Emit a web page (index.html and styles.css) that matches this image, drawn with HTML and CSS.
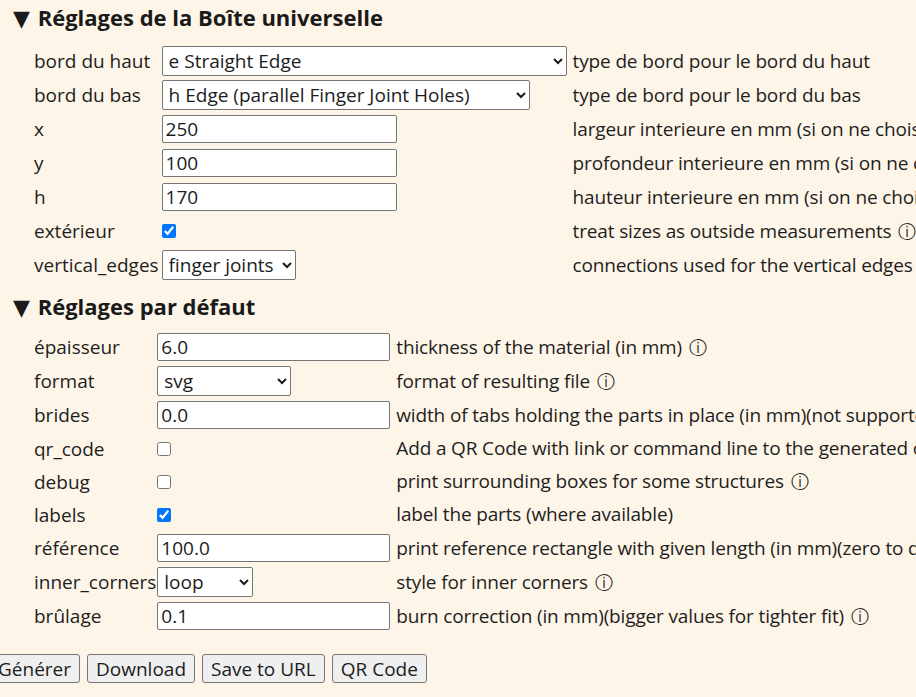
FILE: index.html
```html
<!DOCTYPE html>
<html lang="fr">
<head>
<meta charset="utf-8">
<title>Boîte universelle</title>
<link rel="stylesheet" href="styles.css">
</head>
<body>
<form class="page">
  <details class="group" open>
    <summary class="group-title"><span class="arrow">▼</span> Réglages de la Boîte universelle</summary>
    <table class="params params-box">
      <tr>
        <td class="lbl">bord du haut</td>
        <td class="ctl"><select class="sel sel-top"><option>e Straight Edge</option></select></td>
        <td class="desc">type de bord pour le bord du haut</td>
      </tr>
      <tr>
        <td class="lbl">bord du bas</td>
        <td class="ctl"><select class="sel sel-bottom"><option>h Edge (parallel Finger Joint Holes)</option></select></td>
        <td class="desc">type de bord pour le bord du bas</td>
      </tr>
      <tr>
        <td class="lbl">x</td>
        <td class="ctl"><input class="txt txt-box" type="text" value="250"></td>
        <td class="desc">largeur interieure en mm (si on ne choisit pas extérieur) <span class="info">ⓘ</span></td>
      </tr>
      <tr>
        <td class="lbl">y</td>
        <td class="ctl"><input class="txt txt-box" type="text" value="100"></td>
        <td class="desc">profondeur interieure en mm (si on ne choisit pas extérieur) <span class="info">ⓘ</span></td>
      </tr>
      <tr>
        <td class="lbl">h</td>
        <td class="ctl"><input class="txt txt-box" type="text" value="170"></td>
        <td class="desc">hauteur interieure en mm (si on ne choisit pas extérieur) <span class="info">ⓘ</span></td>
      </tr>
      <tr>
        <td class="lbl">extérieur</td>
        <td class="ctl"><input class="chk" type="checkbox" checked></td>
        <td class="desc">treat sizes as outside measurements <span class="info">ⓘ</span></td>
      </tr>
      <tr>
        <td class="lbl">vertical_edges</td>
        <td class="ctl"><select class="sel sel-edges"><option>finger joints</option></select></td>
        <td class="desc">connections used for the vertical edges <span class="info">ⓘ</span></td>
      </tr>
    </table>
  </details>

  <details class="group" open>
    <summary class="group-title"><span class="arrow">▼</span> Réglages par défaut</summary>
    <table class="params params-default">
      <tr>
        <td class="lbl">épaisseur</td>
        <td class="ctl"><input class="txt txt-def" type="text" value="6.0"></td>
        <td class="desc">thickness of the material (in mm) <span class="info">ⓘ</span></td>
      </tr>
      <tr>
        <td class="lbl">format</td>
        <td class="ctl"><select class="sel sel-format"><option>svg</option></select></td>
        <td class="desc">format of resulting file <span class="info">ⓘ</span></td>
      </tr>
      <tr>
        <td class="lbl">brides</td>
        <td class="ctl"><input class="txt txt-def" type="text" value="0.0"></td>
        <td class="desc">width of tabs holding the parts in place (in mm)(not supported everywhere) <span class="info">ⓘ</span></td>
      </tr>
      <tr class="row-check">
        <td class="lbl">qr_code</td>
        <td class="ctl"><input class="chk" type="checkbox"></td>
        <td class="desc">Add a QR Code with link or command line to the generated output <span class="info">ⓘ</span></td>
      </tr>
      <tr class="row-check">
        <td class="lbl">debug</td>
        <td class="ctl"><input class="chk" type="checkbox"></td>
        <td class="desc">print surrounding boxes for some structures <span class="info">ⓘ</span></td>
      </tr>
      <tr class="row-check">
        <td class="lbl">labels</td>
        <td class="ctl"><input class="chk" type="checkbox" checked></td>
        <td class="desc">label the parts (where available)</td>
      </tr>
      <tr>
        <td class="lbl">référence</td>
        <td class="ctl"><input class="txt txt-def" type="text" value="100.0"></td>
        <td class="desc">print reference rectangle with given length (in mm)(zero to disable) <span class="info">ⓘ</span></td>
      </tr>
      <tr>
        <td class="lbl">inner_corners</td>
        <td class="ctl"><select class="sel sel-corners"><option>loop</option></select></td>
        <td class="desc">style for inner corners <span class="info">ⓘ</span></td>
      </tr>
      <tr>
        <td class="lbl">brûlage</td>
        <td class="ctl"><input class="txt txt-def" type="text" value="0.1"></td>
        <td class="desc">burn correction (in mm)(bigger values for tighter fit) <span class="info">ⓘ</span></td>
      </tr>
    </table>
  </details>

  <div class="actions">
    <button type="button" class="btn">Générer</button>
    <button type="button" class="btn">Download</button>
    <button type="button" class="btn">Save to URL</button>
    <button type="button" class="btn">QR Code</button>
  </div>
</form>
</body>
</html>
```
FILE: styles.css
```css
html {
  overflow: hidden;
}

body {
  margin: 0;
  background: #fdf5e8;
  color: #1e1e1e;
  font-family: "Open Sans", "Noto Sans", "DejaVu Sans", sans-serif;
  font-size: 19px;
}

.page {
  margin: 0;
  white-space: nowrap;
}

.group-title {
  list-style: none;
  display: block;
  height: 34px;
  line-height: 34px;
  padding-left: 13px;
  font-size: 22px;
  font-weight: 700;
  color: #1a1a1a;
  cursor: pointer;
}

.group-title::-webkit-details-marker {
  display: none;
}

.arrow {
  font-family: "DejaVu Sans", sans-serif;
  font-size: 22px;
  margin-right: 2px;
}

.params {
  border-collapse: collapse;
  border-spacing: 0;
  margin-left: 34px;
}

.params-box {
  margin-top: 10px;
  margin-bottom: 7px;
}

.params-default {
  margin-top: 7px;
}

.params tr {
  height: 34px;
}

.params tr.row-check {
  height: 33px;
}

.params td {
  padding: 0;
  vertical-align: middle;
}

.params-box .lbl {
  width: 123px;
  padding-right: 3px;
}

.params-default .lbl {
  width: 118px;
  padding-right: 1px;
}

.params .ctl {
  padding-right: 6px;
}

.params-box .ctl {
  width: 405px;
}

.params-default .ctl {
  width: 233px;
}

.desc {
  line-height: 1.3;
  letter-spacing: -0.15px;
}

.info {
  font-family: "DejaVu Sans", sans-serif;
  font-size: 18px;
  letter-spacing: 0;
  margin-left: 2px;
}

.sel,
.txt,
.btn {
  font: inherit;
  color: #1c1c1c;
  box-sizing: border-box;
  margin: 0;
}

.sel {
  display: block;
  height: 30px;
  padding: 0 2px;
  background-color: #ffffff;
  border: 1px solid #767676;
  border-radius: 2px;
}

.sel-top { width: 405px; }
.sel-bottom { width: 368px; }
.sel-edges { width: 134px; }
.sel-format { width: 134px; }
.sel-corners { width: 96px; }

.txt {
  display: block;
  height: 28px;
  padding: 0 3px;
  background: #ffffff;
  border: 1px solid #767676;
  border-radius: 2px;
}

.txt-box { width: 235px; }
.txt-def { width: 233px; }

.chk {
  display: block;
  width: 14px;
  height: 14px;
  margin: 0;
}

.actions {
  display: flex;
  gap: 7px;
  margin-top: 21px;
  margin-left: -11px;
}

.btn {
  height: 29px;
  padding: 0 8px;
  background: #efefef;
  border: 1px solid #767676;
  border-radius: 3px;
  line-height: 26px;
}
```
